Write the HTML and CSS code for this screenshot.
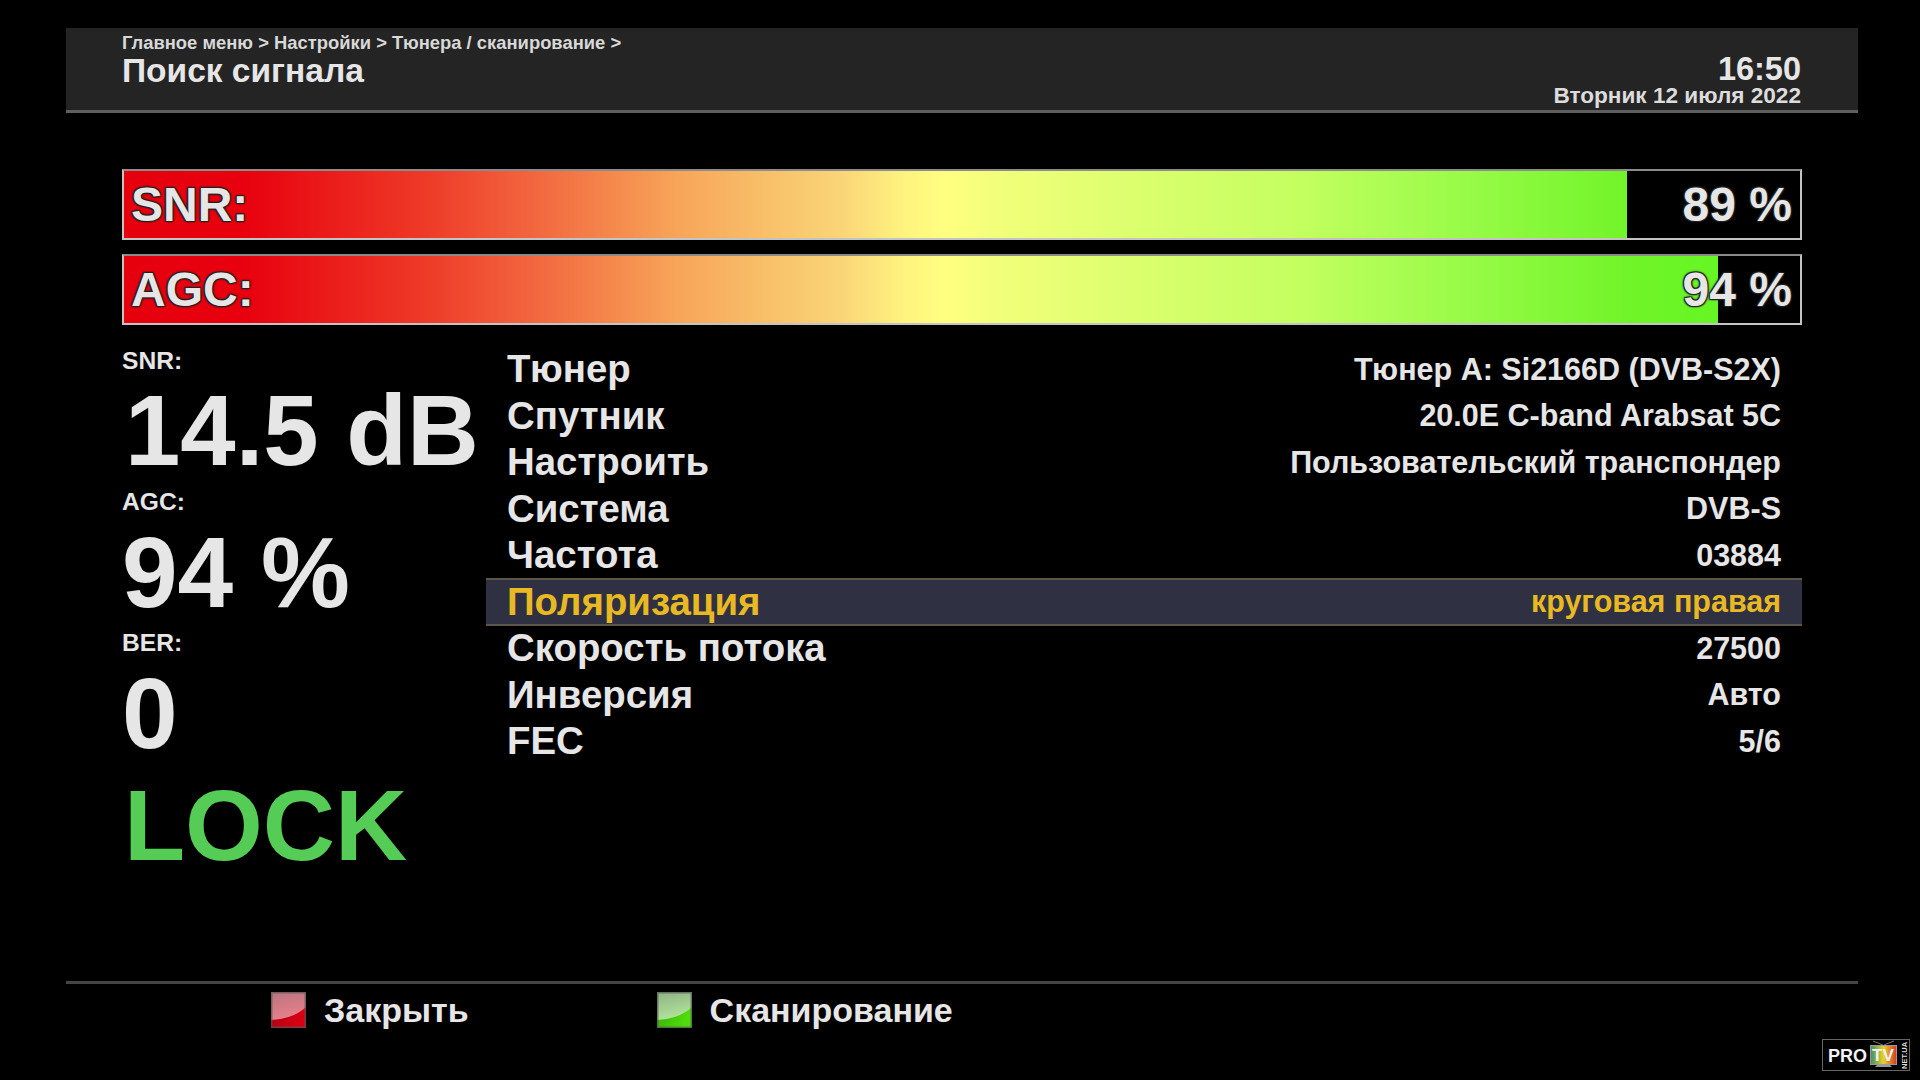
FILE: index.html
```html
<!DOCTYPE html>
<html lang="ru">
<head>
<meta charset="utf-8">
<title>Поиск сигнала</title>
<link rel="stylesheet" href="styles.css">
</head>
<body>
<header class="top">
  <div class="crumbs">
    <div class="path">Главное меню &gt; Настройки &gt; Тюнера / сканирование &gt;</div>
    <div class="title">Поиск сигнала</div>
  </div>
  <div class="clock">
    <div class="time">16:50</div>
    <div class="date">Вторник 12 июля 2022</div>
  </div>
</header>
<main class="main">
  <section class="bars">
    <div class="bar">
      <div class="fill" style="width:89.7%"></div>
      <div class="bar-text"><span>SNR:</span><span>89 %</span></div>
    </div>
    <div class="bar">
      <div class="fill" style="width:95.1%"></div>
      <div class="bar-text"><span>AGC:</span><span>94 %</span></div>
    </div>
  </section>
  <section class="details">
    <div class="stats">
      <div class="stat-label">SNR:</div>
      <div class="stat-value inset">14.5 dB</div>
      <div class="stat-label">AGC:</div>
      <div class="stat-value">94 %</div>
      <div class="stat-label">BER:</div>
      <div class="stat-value">0</div>
      <div class="lock">LOCK</div>
    </div>
    <div class="list">
      <div class="row"><span class="key">Тюнер</span><span class="val">Тюнер A: Si2166D (DVB-S2X)</span></div>
      <div class="row"><span class="key">Спутник</span><span class="val">20.0E C-band Arabsat 5C</span></div>
      <div class="row"><span class="key">Настроить</span><span class="val">Пользовательский транспондер</span></div>
      <div class="row"><span class="key">Система</span><span class="val">DVB-S</span></div>
      <div class="row"><span class="key">Частота</span><span class="val">03884</span></div>
      <div class="row active"><span class="key">Поляризация</span><span class="val">круговая правая</span></div>
      <div class="row"><span class="key">Скорость потока</span><span class="val">27500</span></div>
      <div class="row"><span class="key">Инверсия</span><span class="val">Авто</span></div>
      <div class="row"><span class="key">FEC</span><span class="val">5/6</span></div>
    </div>
  </section>
</main>
<footer class="foot">
  <div class="hint">
    <svg class="key-icon" width="35" height="36" viewBox="0 0 35 36" xmlns="http://www.w3.org/2000/svg">
      <defs>
        <linearGradient id="rb" x1="0" y1="0" x2="1" y2="0.4">
          <stop offset="0" stop-color="#a80010"/>
          <stop offset="1" stop-color="#d80012"/>
        </linearGradient>
        <linearGradient id="rg" x1="0" y1="0" x2="0.3" y2="1">
          <stop offset="0" stop-color="#b8757e"/>
          <stop offset="1" stop-color="#e8808c"/>
        </linearGradient>
      </defs>
      <rect width="35" height="36" fill="url(#rb)"/>
      <path d="M0 0H35V15C25 24 14 27 0 28Z" fill="url(#rg)"/>
      <rect x="0.75" y="0.75" width="33.5" height="34.5" class="key-edge"/>
    </svg>
    <span>Закрыть</span>
  </div>
  <div class="hint">
    <svg class="key-icon" width="35" height="36" viewBox="0 0 35 36" xmlns="http://www.w3.org/2000/svg">
      <defs>
        <linearGradient id="gb" x1="0" y1="0" x2="1" y2="0.4">
          <stop offset="0" stop-color="#36a808"/>
          <stop offset="1" stop-color="#50dc0c"/>
        </linearGradient>
        <linearGradient id="gg" x1="0" y1="0" x2="0.3" y2="1">
          <stop offset="0" stop-color="#8fb084"/>
          <stop offset="1" stop-color="#b0e49a"/>
        </linearGradient>
      </defs>
      <rect width="35" height="36" fill="url(#gb)"/>
      <path d="M0 0H35V15C25 24 14 27 0 28Z" fill="url(#gg)"/>
      <rect x="0.75" y="0.75" width="33.5" height="34.5" class="key-edge"/>
    </svg>
    <span>Сканирование</span>
  </div>
</footer>
<div class="logo">
  <svg width="88" height="32" viewBox="0 0 88 32" xmlns="http://www.w3.org/2000/svg">
    <defs>
      <linearGradient id="tv" x1="0" y1="0" x2="1" y2="0">
        <stop offset="0" stop-color="#3a8f6a"/>
        <stop offset="0.5" stop-color="#e8d12a"/>
        <stop offset="1" stop-color="#d8342a"/>
      </linearGradient>
    </defs>
    <rect x="0.5" y="0.5" width="87" height="31" fill="#000" stroke="#666"/>
    <path d="M51 2 L61 6 M72 2 L62 6" stroke="#777" stroke-width="1" fill="none"/>
    <rect x="48.5" y="6.5" width="26" height="19" fill="url(#tv)" stroke="#999"/>
    <path d="M55 26 L68 26 L70 28 L53 28 Z" fill="#999"/>
    <text class="logo-pro" x="6" y="23">PRO</text>
    <text class="logo-tv" x="50" y="22">TV</text>
    <text class="logo-net" transform="translate(85 30) rotate(-90)">NET.UA</text>
  </svg>
</div>
</body>
</html>
```
FILE: styles.css
```css
* { box-sizing: border-box; }
html, body { margin: 0; padding: 0; }
body {
  width: 1920px;
  height: 1080px;
  overflow: hidden;
  background: #000;
  color: #e6e6e6;
  font-family: "Liberation Sans", Arial, sans-serif;
  font-weight: 700;
  display: flex;
  flex-direction: column;
  padding-top: 28px;
}
.top {
  margin: 0 62px 0 66px;
  height: 85px;
  padding: 4px 57px 3px 56px;
  background: #242424;
  border-bottom: 3px solid #5f5f5f;
  display: flex;
  justify-content: space-between;
}
.path { font-size: 18.4px; line-height: 22px; color: #d8d8d8; }
.title { font-size: 33.5px; line-height: 34px; }
.clock { display: flex; flex-direction: column; justify-content: flex-end; align-items: flex-end; }
.time { font-size: 32.5px; line-height: 32px; }
.date { font-size: 22.6px; line-height: 22px; color: #dcdcdc; }

.main { flex: 1; padding: 56px 118px 0 122px; }
.bars { display: flex; flex-direction: column; gap: 14px; }
.bar {
  position: relative;
  height: 71px;
  border: 2px solid #c4c4c4;
  border-top-color: #8c8c8c;
  background: #000;
}
.fill {
  height: 100%;
  background-image: linear-gradient(90deg, #e6000e 0, #e8000e 7%, #ee3a28 18%, #f26a40 25%, #f7a558 33%, #fad678 43%, #fef37e 46.5%, #ffff80 49%, #f2ff7a 52%, #dcff6e 60%, #c4ff60 70%, #98fb48 80%, #70f428 90%, #5cf81e 100%);
  background-size: 1676px 100%;
  background-repeat: no-repeat;
}
.bar-text {
  position: absolute;
  inset: 0;
  padding: 0 8px 0 7px;
  display: flex;
  justify-content: space-between;
  align-items: center;
  font-size: 48px;
  line-height: 1;
  text-shadow: 1px 1px 1px #222, -1px -1px 1px #222, 1px -1px 1px #222, -1px 1px 1px #222, 0 0 3px #222;
}

.details { display: grid; grid-template-columns: 364px 1fr; margin-top: 21px; }
.stat-label { font-size: 24.6px; line-height: 29px; }
.stat-value { font-size: 100px; line-height: 112px; }
.inset { padding-left: 3px; font-size: 99.5px; }
.lock { font-size: 100px; line-height: 112px; color: #55cc55; padding-left: 2px; }

.row {
  height: 46.5px;
  padding: 0 21px;
  display: flex;
  justify-content: space-between;
  align-items: center;
}
.key { font-size: 38.4px; }
.val { font-size: 30.5px; }
.active {
  height: 48px;
  margin: -0.75px 0;
  background: #2f3142;
  border-top: 2px solid #5c5548;
  border-bottom: 2px solid #5c5548;
  color: #e8b923;
}
.foot {
  margin: 0 62px 0 66px;
  height: 99px;
  border-top: 3px solid #454545;
  padding: 8px 0 0 205px;
  display: flex;
  gap: 188px;
  align-items: flex-start;
  font-size: 34px;
}
.hint { display: flex; align-items: center; gap: 18px; height: 36px; }
.key-icon { display: block; }
.key-edge { fill: none; stroke: #555; stroke-opacity: 0.7; stroke-width: 1.5; }

.logo { position: absolute; left: 1822px; top: 1039px; }
.logo svg { display: block; }
.logo-pro { font: 700 18px "Liberation Sans", sans-serif; fill: #f2f2f2; }
.logo-tv { font: 700 17px "Liberation Sans", sans-serif; fill: #f2f2f2; }
.logo-net { font: 700 7.5px "Liberation Sans", sans-serif; fill: #ddd; }
```
